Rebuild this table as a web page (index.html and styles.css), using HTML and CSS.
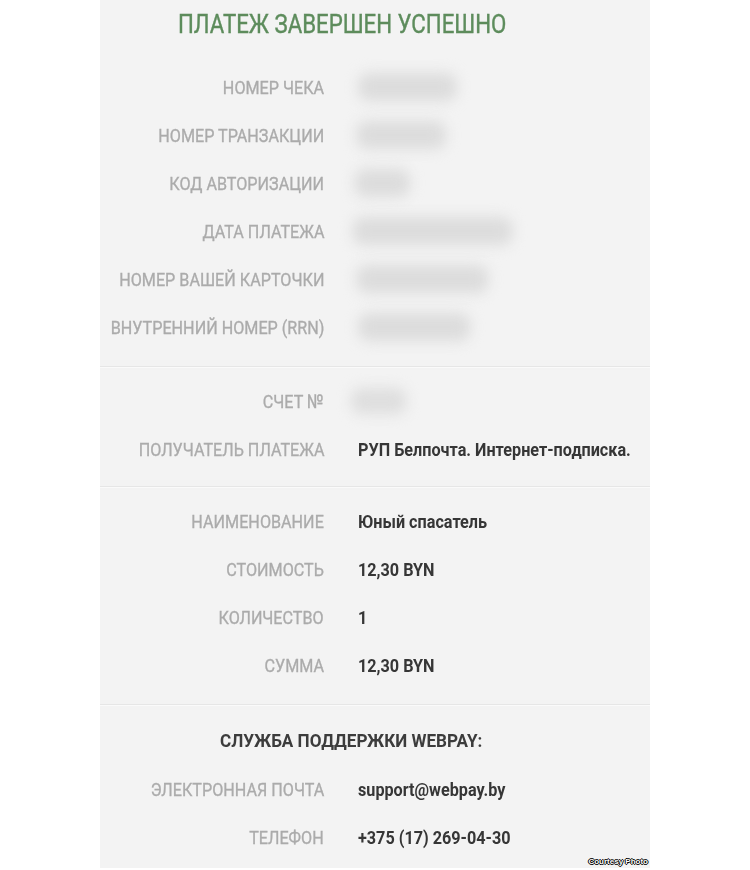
FILE: index.html
```html
<!DOCTYPE html>
<html lang="ru">
<head>
<meta charset="utf-8">
<title>Платеж завершен успешно</title>
<link rel="stylesheet" href="styles.css">
</head>
<body>
<div class="panel">
  <h1 class="title"><span class="title-text">ПЛАТЕЖ ЗАВЕРШЕН УСПЕШНО</span></h1>

  <section class="section s1">
    <div class="row"><div class="label"><span>НОМЕР ЧЕКА</span></div><div class="value"><span class="blur" style="width:110px"></span></div></div>
    <div class="row"><div class="label"><span>НОМЕР ТРАНЗАКЦИИ</span></div><div class="value"><span class="blur" style="width:100px; margin-left:-2px"></span></div></div>
    <div class="row"><div class="label"><span>КОД АВТОРИЗАЦИИ</span></div><div class="value"><span class="blur" style="width:62px; margin-left:-4px"></span></div></div>
    <div class="row"><div class="label"><span>ДАТА ПЛАТЕЖА</span></div><div class="value"><span class="blur" style="width:178px; margin-left:-6px"></span></div></div>
    <div class="row"><div class="label"><span>НОМЕР ВАШЕЙ КАРТОЧКИ</span></div><div class="value"><span class="blur" style="width:147px; margin-left:-2px"></span></div></div>
    <div class="row"><div class="label"><span>ВНУТРЕННИЙ НОМЕР (RRN)</span></div><div class="value"><span class="blur" style="width:125px; margin-left:0px"></span></div></div>
  </section>

  <section class="section s2">
    <div class="row"><div class="label"><span>СЧЕТ №</span></div><div class="value"><span class="blur small" style="width:62px; margin-left:-8px"></span></div></div>
    <div class="row"><div class="label"><span>ПОЛУЧАТЕЛЬ ПЛАТЕЖА</span></div><div class="value">РУП Белпочта. Интернет-подписка.</div></div>
  </section>

  <section class="section s3">
    <div class="row"><div class="label"><span>НАИМЕНОВАНИЕ</span></div><div class="value">Юный спасатель</div></div>
    <div class="row"><div class="label"><span>СТОИМОСТЬ</span></div><div class="value">12,30 BYN</div></div>
    <div class="row"><div class="label"><span>КОЛИЧЕСТВО</span></div><div class="value">1</div></div>
    <div class="row"><div class="label"><span>СУММА</span></div><div class="value">12,30 BYN</div></div>
  </section>

  <section class="section s4">
    <h2 class="support"><span class="support-text">СЛУЖБА ПОДДЕРЖКИ WEBPAY:</span></h2>
    <div class="row"><div class="label"><span>ЭЛЕКТРОННАЯ ПОЧТА</span></div><div class="value">support@webpay.by</div></div>
    <div class="row"><div class="label"><span>ТЕЛЕФОН</span></div><div class="value">+375 (17) 269-04-30</div></div>
  </section>

  <div class="courtesy">Courtesy Photo</div>
</div>
</body>
</html>
```

FILE: styles.css
```css
html, body {
  margin: 0;
  padding: 0;
  background: #ffffff;
}

body {
  font-family: "Roboto", "Liberation Sans", sans-serif;
}

.panel {
  position: relative;
  margin-left: 100px;
  width: 550px;
  height: 868px;
  background: #f3f3f3;
}

.title {
  margin: 0;
  height: 63px;
  padding-left: 78px;
  box-sizing: border-box;
  padding-top: 9px;
  font-size: 26px;
  line-height: 30px;
  font-weight: normal;
  color: #5d8c5c;
  white-space: nowrap;
}

.title-text {
  display: inline-block;
  transform: scaleX(0.855);
  transform-origin: left center;
  -webkit-text-stroke: 0.4px #5d8c5c;
}

.section {
  border-bottom: 1px solid #e6e6e6;
  box-shadow: 0 1px 0 #fafafa;
}

.s1 { padding-bottom: 15px; }
.s2 { padding-top: 10px; padding-bottom: 13px; }
.s3 { padding-top: 10px; padding-bottom: 15px; }
.s4 { padding-top: 12px; border-bottom: none; box-shadow: none; }

.row {
  display: grid;
  grid-template-columns: 224px 1fr;
  column-gap: 34px;
  height: 48px;
  align-items: center;
}

.label {
  display: flex;
  justify-content: flex-end;
  min-width: 0;
}

.label span {
  flex: none;
  font-size: 19px;
  color: #ababab;
  -webkit-text-stroke: 0.35px #ababab;
  white-space: nowrap;
  transform: scaleX(0.85);
  transform-origin: right center;
}

.value {
  font-size: 18px;
  font-weight: bold;
  color: #363636;
  white-space: nowrap;
  display: flex;
  align-items: center;
  transform: scaleX(0.9);
  transform-origin: left center;
}

.blur {
  display: inline-block;
  height: 28px;
  background: #dcdcdc;
  border-radius: 12px;
  filter: blur(7px);
}

.blur.small {
  height: 26px;
  background: #dedede;
}

.support {
  margin: 0;
  height: 48px;
  line-height: 48px;
  padding-left: 120px;
  font-size: 19px;
  font-weight: bold;
  color: #3c3c3c;
  white-space: nowrap;
}

.support-text {
  display: inline-block;
  transform: scaleX(0.9);
  transform-origin: left center;
}

.courtesy {
  position: absolute;
  right: 2px;
  bottom: 1px;
  font-family: "Liberation Sans", Arial, sans-serif;
  font-size: 8px;
  font-weight: bold;
  line-height: 10px;
  color: #ffffff;
  text-shadow: -1px 0 #000, 1px 0 #000, 0 -1px #000, 0 1px #000;
}
```
